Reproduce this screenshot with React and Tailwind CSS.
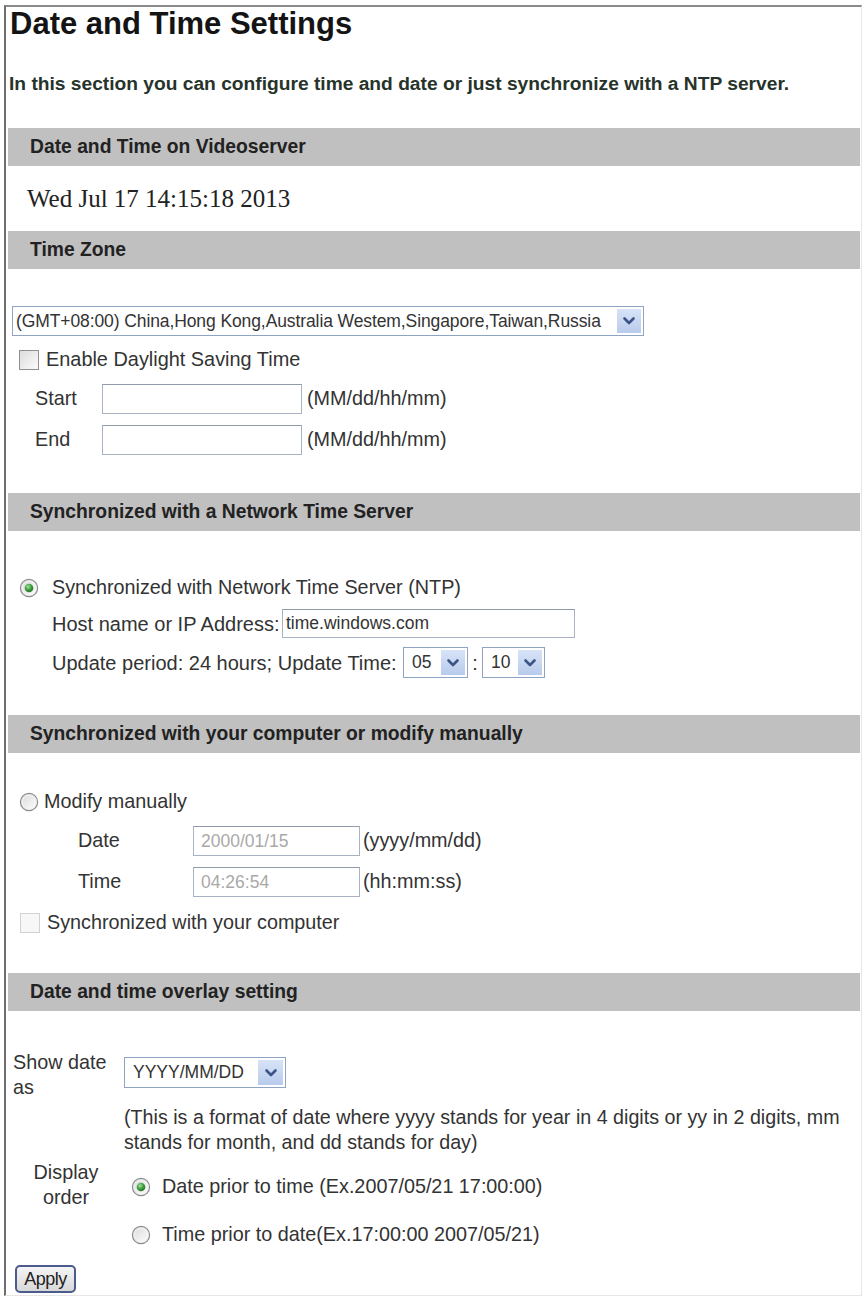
import React from "react";

function Chevron() {
  return (
    <svg width="14" height="10" viewBox="0 0 14 10">
      <path d="M2.5 2.5 L7 7 L11.5 2.5" fill="none" stroke="#3b5587" strokeWidth="2.6" strokeLinecap="round" strokeLinejoin="round" />
    </svg>
  );
}

function Select({ value, className, textClass, arrowClass }) {
  return (
    <div className={`flex items-center border border-[#8ea4c2] bg-white ${className}`}>
      <span className={`flex-1 whitespace-nowrap overflow-hidden ${textClass}`}>{value}</span>
      <span className={`flex items-center justify-center self-stretch my-[2px] mr-[2px] bg-gradient-to-b from-[#d7e3f7] to-[#b9cbec] ${arrowClass}`}>
        <Chevron />
      </span>
    </div>
  );
}

function TextInput({ value = "", className = "", muted = false }) {
  return (
    <div
      className={`flex items-center border border-[#a7b2c2] border-t-[#8f9aab] bg-white pl-[7px] text-[17.5px] whitespace-nowrap ${
        muted ? "text-[#a9a9a9]" : "text-[#333]"
      } ${className}`}
    >
      {value}
    </div>
  );
}

function Radio({ checked }) {
  return (
    <svg width="20" height="20" viewBox="0 0 20 20" className="shrink-0">
      <defs>
        <linearGradient id="radioFace" x1="0" y1="0" x2="1" y2="1">
          <stop offset="0" stopColor="#d9d9d9" />
          <stop offset="1" stopColor="#ffffff" />
        </linearGradient>
        <radialGradient id="radioDot" cx="0.4" cy="0.35" r="0.7">
          <stop offset="0" stopColor="#a6e0a6" />
          <stop offset="0.55" stopColor="#3c9d3c" />
          <stop offset="1" stopColor="#1f6e1f" />
        </radialGradient>
      </defs>
      <circle cx="10" cy="10" r="8.6" fill="url(#radioFace)" stroke="#8b8d8f" strokeWidth="1.2" />
      <circle cx="10" cy="10" r="6.6" fill="none" stroke="#f4f4f4" strokeWidth="1" />
      {checked && <circle cx="10" cy="10" r="4.3" fill="url(#radioDot)" />}
    </svg>
  );
}

function Checkbox({ disabled }) {
  return (
    <span
      className={`block w-[20px] h-[20px] shrink-0 border ${
        disabled
          ? "border-[#d2d2d2] bg-[#f7f7f7]"
          : "border-[#8d8f91] bg-gradient-to-br from-[#dcdcdc] to-[#fbfbfb]"
      }`}
    />
  );
}

function SectionBar({ title, className = "" }) {
  return (
    <div
      className={`ml-[2px] mr-[1px] h-[38px] flex items-center pl-[22px] bg-[#c0c0c0] text-[19.3px] font-bold text-[#222] ${className}`}
    >
      {title}
    </div>
  );
}

export default function App() {
  return (
    <div className="w-[864px] h-[1298px] bg-white overflow-hidden font-['Liberation_Sans',Arial,sans-serif] text-[#333]">
      <div className="ml-[4px] mt-[5px] w-[858px] h-[1291px] border-l-2 border-t-2 border-l-[#6f6f6f] border-t-[#8a8a8a] border-r border-b border-r-[#e6e6e6] border-b-[#e6e6e6] flex flex-col">
        <h1 className="h-[34px] leading-[34px] pl-[4px] text-[31px] font-bold text-[#141414]">
          Date and Time Settings
        </h1>
        <p className="mt-[31px] h-[24px] leading-[24px] pl-[3px] text-[19.2px] font-bold text-[#26332a] whitespace-nowrap">
          In this section you can configure time and date or just synchronize with a NTP server.
        </p>

        <SectionBar title="Date and Time on Videoserver" className="mt-[32px]" />
        <div className="h-[65px] flex items-center pl-[21px] font-['Liberation_Serif','Times_New_Roman',serif] text-[25px] text-[#222]">
          Wed Jul 17 14:15:18 2013
        </div>

        <SectionBar title="Time Zone" />
        <Select
          value="(GMT+08:00) China,Hong Kong,Australia Westem,Singapore,Taiwan,Russia"
          className="mt-[37px] ml-[6px] w-[632px] h-[30px]"
          textClass="pl-[3px] text-[17.5px] tracking-[-0.1px] text-[#333]"
          arrowClass="w-[24px]"
        />
        <div className="mt-[11px] h-[26px] flex items-center pl-[13px] gap-[7px] text-[19.9px]">
          <Checkbox />
          <span>Enable Daylight Saving Time</span>
        </div>
        {[
          ["Start", "mt-[11px]"],
          ["End", "mt-[11px]"],
        ].map(([label, mt]) => (
          <div key={label} className={`${mt} h-[30px] flex items-center text-[19.8px]`}>
            <span className="w-[96px] pl-[29px]">{label}</span>
            <TextInput className="w-[200px] h-[30px]" />
            <span className="ml-[5px]">(MM/dd/hh/mm)</span>
          </div>
        ))}

        <SectionBar title="Synchronized with a Network Time Server" className="mt-[38px]" />
        <div className="mt-[45px] h-[24px] flex items-center pl-[13px] gap-[13px] text-[19.8px]">
          <Radio checked />
          <span>Synchronized with Network Time Server (NTP)</span>
        </div>
        <div className="mt-[9px] h-[29px] flex items-center pl-[46px] text-[20px]">
          <span className="w-[230px] whitespace-nowrap">Host name or IP Address:</span>
          <TextInput value="time.windows.com" className="w-[293px] h-[29px] !pl-[3px] text-[#222]" />
        </div>
        <div className="mt-[9px] h-[31px] flex items-center pl-[46px] text-[20px]">
          <span className="w-[351px] whitespace-nowrap">Update period: 24 hours; Update Time:</span>
          <Select
            value="05"
            className="w-[65px] h-[31px]"
            textClass="pl-[8px] text-[17.5px] text-[#333]"
            arrowClass="w-[24px]"
          />
          <span className="w-[14px] text-center">:</span>
          <Select
            value="10"
            className="w-[63px] h-[31px]"
            textClass="pl-[8px] text-[17.5px] text-[#333]"
            arrowClass="w-[24px]"
          />
        </div>

        <SectionBar title="Synchronized with your computer or modify manually" className="mt-[37px]" />
        <div className="mt-[37px] h-[24px] flex items-center pl-[13px] gap-[5px] text-[19.8px]">
          <Radio />
          <span>Modify manually</span>
        </div>
        {[
          ["Date", "2000/01/15", "(yyyy/mm/dd)", "mt-[12px]"],
          ["Time", "04:26:54", "(hh:mm:ss)", "mt-[11px]"],
        ].map(([label, val, fmt, mt]) => (
          <div key={label} className={`${mt} h-[30px] flex items-center text-[19.8px]`}>
            <span className="w-[187px] pl-[72px]">{label}</span>
            <TextInput value={val} muted className="w-[167px] h-[30px]" />
            <span className="ml-[3px]">{fmt}</span>
          </div>
        ))}
        <div className="mt-[14px] h-[24px] flex items-center pl-[14px] gap-[7px] text-[19.8px]">
          <Checkbox disabled />
          <span>Synchronized with your computer</span>
        </div>

        <SectionBar title="Date and time overlay setting" className="mt-[38px]" />
        <div className="mt-[39px] flex text-[19.8px] leading-[25px]">
          <div className="w-[118px] pl-[7px]">
            Show date
            <br />
            as
          </div>
          <Select
            value="YYYY/MM/DD"
            className="mt-[7px] w-[162px] h-[31px]"
            textClass="pl-[8px] text-[17.5px] text-[#333]"
            arrowClass="w-[25px]"
          />
        </div>
        <p className="mt-[5px] ml-[118px] text-[19.7px] leading-[25px] whitespace-nowrap">
          (This is a format of date where yyyy stands for year in 4 digits or yy in 2 digits, mm
          <br />
          stands for month, and dd stands for day)
        </p>
        <div className="mt-[5px] flex text-[19.8px]">
          <div className="w-[118px] text-center leading-[25px] pl-[2px]">
            Display
            <br />
            order
          </div>
          <div className="pt-[15px] pl-[7px] flex flex-col gap-[24px]">
            <div className="h-[24px] flex items-center gap-[11px]">
              <Radio checked />
              <span>Date prior to time (Ex.2007/05/21 17:00:00)</span>
            </div>
            <div className="h-[24px] flex items-center gap-[11px]">
              <Radio />
              <span>Time prior to date(Ex.17:00:00 2007/05/21)</span>
            </div>
          </div>
        </div>
        <button className="mt-[18px] ml-[9px] w-[61px] h-[28px] border-2 border-[#4a5b8c] rounded-[5px] bg-gradient-to-b from-[#f5f5f5] to-[#d8d8d8] text-[18px] tracking-[-0.5px] text-[#222] leading-none">
          Apply
        </button>
      </div>
    </div>
  );
}
